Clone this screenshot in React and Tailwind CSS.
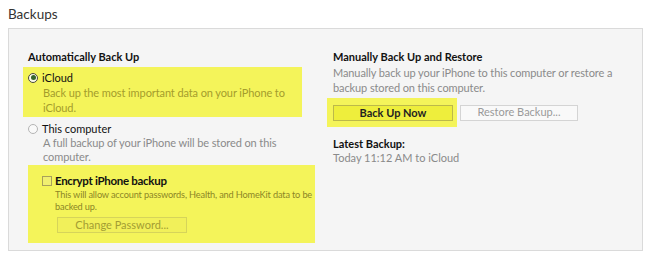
import React from "react";

function Radio({ checked }) {
  return (
    <span
      className={`inline-flex h-[10px] w-[10px] shrink-0 items-center justify-center rounded-full border ${
        checked ? "border-[#4a4a3a] bg-[#fafae8]" : "border-[#b4b4b4] bg-[#f9f9f9]"
      }`}
    >
      {checked && <span className="h-[5px] w-[5px] rounded-full bg-[#35652c]" />}
    </span>
  );
}

export default function App() {
  return (
    <div className="h-[260px] w-[650px] bg-white text-[#111] [font-family:Lato,sans-serif]">
      <div className="pl-2 pt-[4px] text-[13.5px] leading-[20px] text-[#333]">Backups</div>
      <div className="ml-2 mt-[4px] flex h-[223px] w-[635px] border border-[#dadada] bg-[#f5f5f5]">
        <div className="w-[307px] pl-[19px] pt-[20px]">
          <div className="text-[11px] font-bold leading-[16px]">Automatically Back Up</div>
          <div className="-ml-[5px] mt-[2px] w-[279px] bg-[#f4f45a] pb-[2px] pl-[5px] pt-[3px]">
            <div className="flex items-center gap-[4px] text-[11px] leading-[15px]">
              <Radio checked />
              <span>iCloud</span>
            </div>
            <div className="pl-[15px] text-[11px] leading-[15px] tracking-[-0.1px] text-[#a49c2c]">
              Back up the most important data on your iPhone to
              <br />
              iCloud.
            </div>
          </div>
          <div className="mt-[4px] flex items-center gap-[4px] text-[11px] leading-[15px]">
            <Radio />
            <span>This computer</span>
          </div>
          <div className="pl-[15px] text-[11px] leading-[14px] tracking-[-0.1px] text-[#8a8a8a]">
            A full backup of your iPhone will be stored on this
            <br />
            computer.
          </div>
          <div className="mt-[1px] h-[78px] w-[287px] bg-[#f4f45a] pl-[14px] pt-[8px]">
            <div className="flex items-center gap-[3px] text-[11.5px] font-bold leading-[15px] tracking-[-0.3px]">
              <span className="h-[10px] w-[10px] shrink-0 border border-[#a8a05a] bg-[#f0ef70]" />
              <span>Encrypt iPhone backup</span>
            </div>
            <div className="mt-[1px] whitespace-nowrap pl-[13px] text-[9.2px] leading-[12px] tracking-[-0.15px] text-[#8c8626]">
              This will allow account passwords, Health, and HomeKit data to be
              <br />
              backed up.
            </div>
            <div className="ml-[15px] mt-[4px] flex h-[16px] w-[130px] items-center justify-center border border-[#d6d45a] bg-[#f1f05a] text-[11px] text-[#a39d33]">
              Change Password...
            </div>
          </div>
        </div>
        <div className="w-[310px] pl-[17px] pt-[20px]">
          <div className="text-[11px] font-bold leading-[16px]">Manually Back Up and Restore</div>
          <div className="text-[11px] leading-[15px] tracking-[-0.1px] text-[#8a8a8a]">
            Manually back up your iPhone to this computer or restore a
            <br />
            backup stored on this computer.
          </div>
          <div className="mt-[3px] flex items-center">
            <div className="-ml-[6px] bg-[#f4f45a] pb-[6px] pl-[6px] pr-[4px] pt-[7px]">
              <div className="flex h-[16px] w-[120px] items-center justify-center border border-[#bcb94a] bg-[#eeee3c] text-[11px] font-bold text-[#222]">
                Back Up Now
              </div>
            </div>
            <div className="ml-[3px] flex h-[16px] w-[118px] items-center justify-center border border-[#d4d4d4] bg-[#f9f9f9] text-[11px] text-[#9a9a9a]">
              Restore Backup...
            </div>
          </div>
          <div className="mt-[9px] text-[11px] font-bold leading-[15px]">Latest Backup:</div>
          <div className="text-[11px] leading-[14px] text-[#8a8a8a]">Today 11:12 AM to iCloud</div>
        </div>
      </div>
    </div>
  );
}
